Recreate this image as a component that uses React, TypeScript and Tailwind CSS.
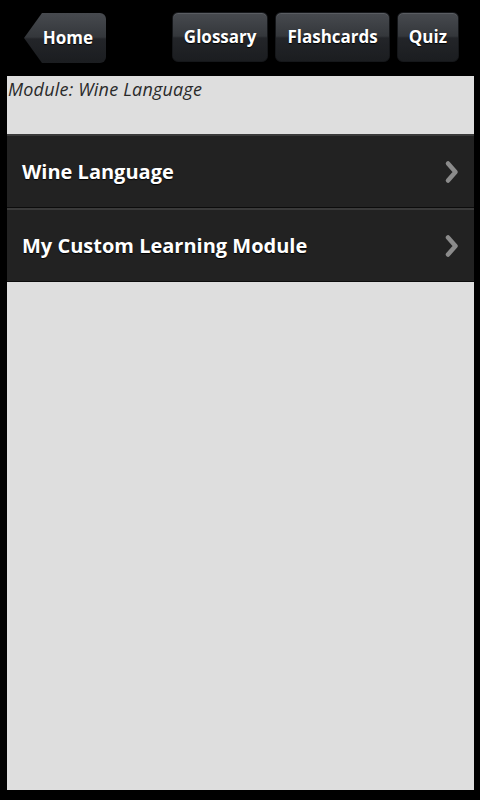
const navButtons = ["Glossary", "Flashcards", "Quiz"]
const modules = ["Wine Language", "My Custom Learning Module"]

const btnFace =
  "bg-[linear-gradient(to_bottom,#474a4f_0%,#34373b_48%,#232529_52%,#1b1d20_100%)] text-white font-bold text-[17px] [text-shadow:0_1px_1px_#000]"

function NavButton({ label }: { label: string }) {
  return (
    <div
      className={`h-[50px] px-[11px] flex items-center rounded-[6px] border border-[#15171a] shadow-[inset_0_1px_0_#5a5d62] ${btnFace}`}
    >
      {label}
    </div>
  )
}

function Chevron() {
  return (
    <svg width="16" height="24" viewBox="0 0 16 24" className="mr-[2px]">
      <polyline
        points="4,3.5 11.5,12 4,20.5"
        fill="none"
        stroke="#8b8b8b"
        strokeWidth="4.5"
        strokeLinejoin="round"
        strokeLinecap="round"
      />
    </svg>
  )
}

export default function App() {
  return (
    <div
      className="w-[480px] h-[800px] bg-black flex flex-col overflow-hidden"
      style={{ fontFamily: '"Open Sans", "DejaVu Sans", sans-serif' }}
    >
      {/* top bar */}
      <div className="h-[76px] flex items-start pt-[12px] pl-[24px] pr-[21px]">
        <div
          className={`h-[50px] w-[82px] flex items-center justify-end pr-[13px] mt-[1px] [clip-path:polygon(18px_0,100%_0,100%_100%,18px_100%,0_50%)] rounded-r-[6px] ${btnFace}`}
        >
          Home
        </div>
        <div className="flex-1" />
        <div className="flex gap-[7px]">
          {navButtons.map((b) => (
            <NavButton key={b} label={b} />
          ))}
        </div>
      </div>

      {/* content panel */}
      <div className="ml-[7px] mr-[6px] h-[714px] bg-[#dedede] flex flex-col">
        <div className="h-[58px] pl-[1px] pt-[1px]">
          <span className="italic text-[18px] leading-[24px] tracking-[0.2px] text-[#2a2a2a]">
            Module: Wine Language
          </span>
        </div>
        {modules.map((m) => (
          <div
            key={m}
            className="h-[74px] bg-[#222222] border-t-[2px] border-t-[#3a3a3a] border-b border-b-[#0c0c0c] flex items-center pl-[15px] pr-[12px]"
          >
            <span className="flex-1 text-white font-bold text-[20px] [text-shadow:0_1px_1px_#000]">{m}</span>
            <Chevron />
          </div>
        ))}
      </div>
    </div>
  )
}
